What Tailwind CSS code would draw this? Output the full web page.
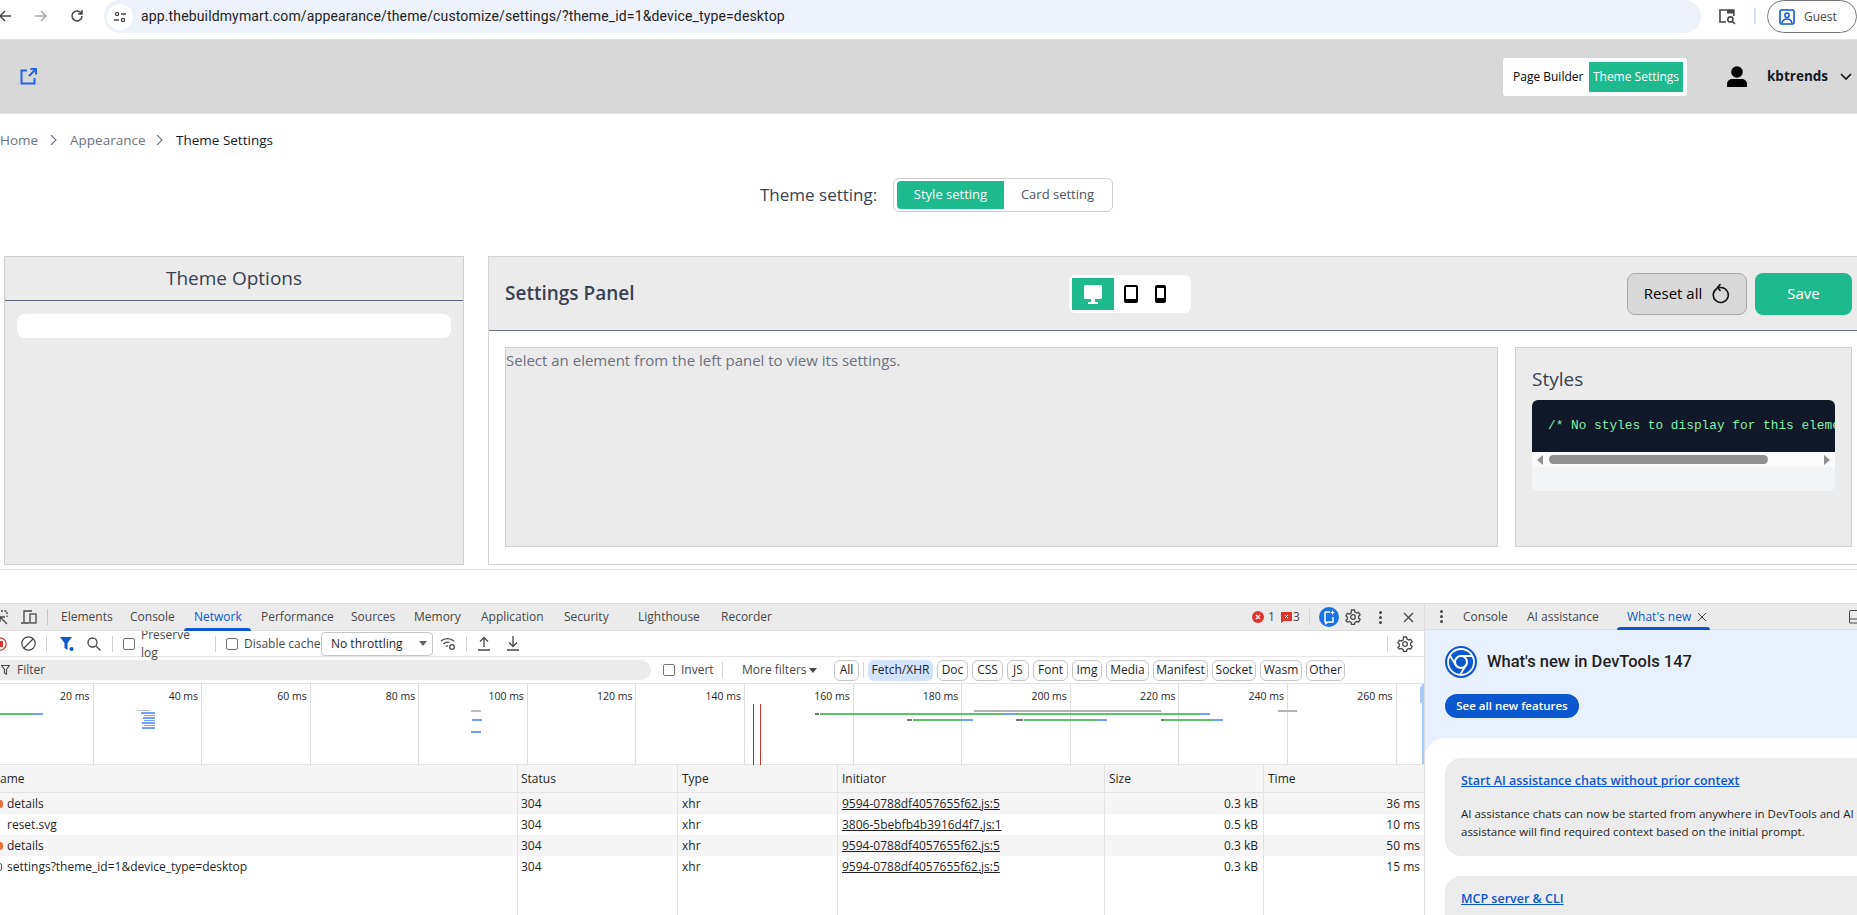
<!DOCTYPE html>
<html lang="en">

<head>
    <meta charset="UTF-8" />
    <title>Theme Settings</title>
    <script src="https://cdn.jsdelivr.net/npm/@tailwindcss/browser@4"></script>
</head>

<body class="w-[1857px] h-[915px] overflow-hidden bg-white font-['Open_Sans',sans-serif] text-[#1f1f1f]">

    <!-- Browser toolbar -->
    <div class="relative flex h-[39px] items-start bg-white">
        <svg class="absolute left-[-2px] top-[9px] w-[14px] h-[14px]" viewBox="0 0 14 14" fill="none" stroke="#474747" stroke-width="1.5"><path d="M13 7H2M7 2 2 7l5 5" /></svg>
        <svg class="absolute left-[34px] top-[9px] w-[14px] h-[14px]" viewBox="0 0 14 14" fill="none" stroke="#a8a8a8" stroke-width="1.5"><path d="M1 7h11M7 2l5 5-5 5" /></svg>
        <svg class="absolute left-[70px] top-[9px] w-[14px] h-[14px]" viewBox="0 0 14 14" fill="none" stroke="#474747" stroke-width="1.5"><path d="M12 7a5 5 0 1 1-1.5-3.6L12 5M12 1v4H8" /></svg>
        <div class="ml-[104px] flex h-[33px] w-[1611px] items-center rounded-r-full rounded-l-full bg-[#ecf1fa]">
            <div class="ml-[3px] flex h-[26px] w-[26px] items-center justify-center rounded-full bg-white">
                <svg class="w-[14px] h-[14px]" viewBox="0 0 14 14" fill="none" stroke="#474747" stroke-width="1.3"><circle cx="4" cy="4" r="1.6" /><path d="M8 4h5M1 10h5" /><circle cx="10" cy="10" r="1.6" /></svg>
            </div>
            <span class="ml-[8px] font-['Roboto',sans-serif] text-[14px] tracking-[0.01em] text-[#1f1f1f]">app.thebuildmymart.com/appearance/theme/customize/settings/?theme_id=1&amp;device_type=desktop</span>
        </div>
        <svg class="ml-[17px] mt-[8px] w-[18px] h-[17px]" viewBox="0 0 18 17" fill="none" stroke="#474747" stroke-width="1.6"><path d="M8 14H2V2h14v6" /><rect x="9" y="2" width="7" height="3.5" fill="#474747" stroke="none" /><circle cx="12.5" cy="11.5" r="2.6" /><path d="m14.5 13.5 2.5 2.5" /></svg>
        <div class="ml-[18px] mt-[8px] h-[16px] w-[2px] bg-[#d3e3fd]"></div>
        <div class="ml-[11px] flex h-[33px] w-[90px] shrink-0 items-center rounded-full border border-[#747775] pl-[11px]">
            <svg class="w-[16px] h-[16px]" viewBox="0 0 16 16"><rect x="1" y="1" width="14" height="14" rx="1.5" fill="none" stroke="#0b57d0" stroke-width="1.6" /><circle cx="8" cy="6.2" r="2.2" fill="none" stroke="#0b57d0" stroke-width="1.4" /><path d="M3 14c.6-3 2.6-4 5-4s4.400 1 5 4" fill="none" stroke="#0b57d0" stroke-width="1.4" /></svg>
            <span class="ml-[9px] text-[12px] text-[#474747]">Guest</span>
        </div>
    </div>

    <!-- App header -->
    <div class="flex h-[75px] items-center border-y border-[#e3e3e3] bg-[#d8d8d8]">
        <svg class="ml-[20px] w-[17px] h-[17px]" viewBox="0 0 17 17" fill="none" stroke="#2563eb" stroke-width="2"><path d="M7 2.500H1.500v13h13V10M9 8l7-7M10.500 1H16v5.500" /></svg>
        <div class="ml-auto flex h-[38px] w-[184px] items-center rounded-[3px] bg-white pl-[10px] text-[12px]">
            <span class="w-[76px] text-black">Page Builder</span>
            <span class="flex h-[30px] w-[94px] items-center justify-center bg-[#1eb98c] text-white">Theme Settings</span>
        </div>
        <svg class="ml-[40px] w-[20px] h-[21px]" viewBox="0 0 20 21" fill="#000"><circle cx="10" cy="6" r="5.800" /><path d="M0 21v-3c0-3.500 3-5 5-5h10c2 0 5 1.500 5 5v3z" /></svg>
        <span class="ml-[20px] w-[56px] text-[13.500px] font-bold text-[#111827]">kbtrends</span>
        <svg class="ml-[17px] mr-[5px] w-[12px] h-[8px]" viewBox="0 0 12 8" fill="none" stroke="#111" stroke-width="1.6"><path d="m1 1 5 5 5-5" /></svg>
    </div>

    <!-- Breadcrumb -->
    <div class="mt-[15px] flex h-[22px] items-center text-[13.500px]">
        <span class="w-[37px] text-[#6b7280]">Home</span>
        <svg class="ml-[13px] w-[7px] h-[10px]" viewBox="0 0 7 10" fill="none" stroke="#6b7280" stroke-width="1.100"><path d="m1 0 5 5-5 5" /></svg>
        <span class="ml-[13px] w-[73px] text-[#6b7280]">Appearance</span>
        <svg class="ml-[13px] w-[7px] h-[10px]" viewBox="0 0 7 10" fill="none" stroke="#6b7280" stroke-width="1.100"><path d="m1 0 5 5-5 5" /></svg>
        <span class="ml-[13px] text-[#111827]">Theme Settings</span>
    </div>

    <!-- Theme setting switch -->
    <div class="mt-[27px] ml-[760px] flex h-[34px] items-center">
        <span class="w-[133px] text-[17px] font-medium text-[#374151]">Theme setting:</span>
        <div class="flex h-[34px] w-[220px] items-center rounded-md border border-[#cfcfcf] bg-white pl-[3px] text-[13px]">
            <span class="flex h-[28px] w-[107px] items-center justify-center rounded-l-[4px] bg-[#1eb98c] text-white">Style setting</span>
            <span class="flex h-[28px] w-[107px] items-center justify-center text-[#4b5563]">Card setting</span>
        </div>
    </div>

    <!-- Panels -->
    <div class="mt-[44px] flex h-[309px] pl-[4px]">
        <div class="h-full w-[460px] border border-[#cfcfcf] bg-[#ebebeb]">
            <div class="flex h-[44px] items-center justify-center border-b border-[#5b6478] text-[19px] text-[#374151]">Theme Options</div>
            <div class="mx-[12px] mt-[13px] h-[24px] rounded-lg bg-white"></div>
        </div>
        <div class="ml-[24px] h-full w-[1369px] border-y border-l border-[#d4d4d4]">
            <div class="relative flex h-[74px] items-center border-b border-[#6b7280] bg-[#ebebeb] pl-[16px]">
                <span class="text-[19px] font-semibold text-[#374151]">Settings Panel</span>
                <div class="absolute left-[580px] top-[18px] flex h-[38px] w-[122px] items-center rounded-md bg-white pl-[3px]">
                    <span class="flex h-[32px] w-[42px] items-center justify-center bg-[#1eb98c]">
                        <svg class="w-[18px] h-[19px]" viewBox="0 0 18 19" fill="#fff"><path d="M1.500 0h15A1.500 1.500 0 0 1 18 1.500v11a1.500 1.500 0 0 1-1.500 1.500h-15A1.500 1.500 0 0 1 0 12.500v-11A1.500 1.500 0 0 1 1.500 0zM3 3v8h12V3z" /><rect x="3" y="3" width="12" height="8" /><rect x="7" y="14" width="4" height="3" /><rect x="4" y="17" width="10" height="2" /></svg>
                    </span>
                    <svg class="ml-[10px] w-[14px] h-[18px]" viewBox="0 0 14 18" fill="#000"><path fill-rule="evenodd" d="M2 0h10a2 2 0 0 1 2 2v14a2 2 0 0 1-2 2H2a2 2 0 0 1-2-2V2a2 2 0 0 1 2-2zm0 2v12h10V2z" /></svg>
                    <svg class="ml-[17px] w-[11px] h-[18px]" viewBox="0 0 11 18" fill="#000"><path fill-rule="evenodd" d="M2 0h7a2 2 0 0 1 2 2v14a2 2 0 0 1-2 2H2a2 2 0 0 1-2-2V2a2 2 0 0 1 2-2zm0 3v10h7V3z" /></svg>
                </div>
                <div class="ml-auto mr-[5px] flex items-center gap-[8px]">
                    <div class="flex h-[42px] w-[120px] items-center justify-center gap-[10px] rounded-lg border border-[#a9a9a9] bg-[#d8d8d8] text-[15px] text-black">
                        Reset all
                        <svg class="w-[18px] h-[20px]" viewBox="0 0 18 20" fill="none" stroke="#111" stroke-width="1.600"><path d="M5 4.500a7.500 7.500 0 1 0 4-1H6M8.500 0 5.500 3.500 8.500 7" /></svg>
                    </div>
                    <div class="flex h-[42px] w-[97px] items-center justify-center rounded-lg bg-[#1eb98c] text-[15px] text-white">Save</div>
                </div>
            </div>
            <div class="flex gap-[17px] pl-[16px] pt-[16px]">
                <div class="h-[200px] w-[993px] border border-[#cfcfcf] bg-[#ebebeb] text-[15px] leading-[24px] text-[#6b7280]">Select an element from the left panel to view its settings.</div>
                <div class="h-[200px] w-[337px] border border-[#cfcfcf] bg-[#ebebeb] pl-[16px] pr-[16px]">
                    <div class="mt-[18px] h-[34px] text-[19px] font-medium leading-[26px] text-[#374151]">Styles</div>
                    <div class="h-[91px] overflow-hidden rounded-md bg-[#f3f4f6]">
                        <div class="flex h-[52px] items-center overflow-hidden whitespace-nowrap bg-[#111827] pl-[16px] font-['Liberation_Mono',monospace] text-[12.800px] text-[#86efac]">/* No styles to display for this element */</div>
                        <div class="relative h-[15px] bg-[#fafafa]">
                            <span class="absolute left-[5px] top-[3px] h-0 w-0 border-y-[5px] border-r-[6px] border-y-transparent border-r-[#8f8f8f]"></span>
                            <span class="absolute left-[17px] top-[3px] h-[9px] w-[219px] rounded-full bg-[#8f8f8f]"></span>
                            <span class="absolute right-[5px] top-[3px] h-0 w-0 border-y-[5px] border-l-[6px] border-y-transparent border-l-[#8f8f8f]"></span>
                        </div>
                    </div>
                </div>
            </div>
        </div>
    </div>
    <div class="mt-[4px] h-[1px] bg-[#e5e5e5]"></div>

    <!-- DevTools -->
    <div class="mt-[33px] flex h-[312px] border-t border-[#dcdcdc] text-[12px] text-[#474747]">
        <div class="w-[1424px] shrink-0">

            <!-- Main tabs -->
            <div class="relative flex h-[27px] items-center border-b border-[#dcdcdc] bg-[#ebebeb]">
                <svg class="ml-[-7px] w-[15px] h-[15px]" viewBox="0 0 15 15" fill="none" stroke="#474747" stroke-width="1.300"><path stroke-dasharray="2 1.500" d="M1 1h13v6M1 1v13h6" /><path d="m7 7 7 7M7 7h5M7 7v5" /></svg>
                <svg class="ml-[13px] w-[16px] h-[15px]" viewBox="0 0 16 15" fill="none" stroke="#474747" stroke-width="1.300"><path d="M3 12V1h8M0 13h8" /><rect x="9" y="4" width="6" height="9" /></svg>
                <div class="ml-[10px] h-[16px] w-px bg-[#c4c7c5]"></div>
                <span class="ml-[13px] w-[69px]">Elements</span>
                <span class="w-[64px]">Console</span>
                <span class="relative flex h-full w-[67px] items-center text-[#0b57d0]">Network<span class="absolute left-[-10px] bottom-[-1px] h-[3px] w-[67px] rounded-t-sm bg-[#0b57d0]"></span></span>
                <span class="w-[90px]">Performance</span>
                <span class="w-[63px]">Sources</span>
                <span class="w-[67px]">Memory</span>
                <span class="w-[83px]">Application</span>
                <span class="w-[74px]">Security</span>
                <span class="w-[83px]">Lighthouse</span>
                <span>Recorder</span>
                <div class="absolute right-[10px] top-[2px] flex h-[22px] items-center">
                    <svg class="w-[12px] h-[12px]" viewBox="0 0 12 12"><circle cx="6" cy="6" r="6" fill="#dc362e" /><path d="m4 4 4 4M8 4 4 8" stroke="#fff" stroke-width="1.200" /></svg>
                    <span class="ml-[4px] w-[13px]">1</span>
                    <svg class="w-[11px] h-[11px]" viewBox="0 0 11 11"><path d="M0 0h11v9H3l-3 2z" fill="#dc362e" /><path d="m4 3 3 3M7 3 4 6" stroke="#fff" /></svg>
                    <span class="ml-[1px] w-[16px]">3</span>
                    <div class="h-[16px] w-px bg-[#d4d4d4]"></div>
                    <svg class="ml-[9px] w-[20px] h-[20px]" viewBox="0 0 20 20"><circle cx="10" cy="10" r="10" fill="#1b73e8" /><path d="M6 5h5M14 10v5H9l-2 1.500V15H6V5" fill="none" stroke="#fff" stroke-width="1.500" /><path d="m13.500 3 .8 1.700 1.700.8-1.700.8-.8 1.700-.8-1.700-1.700-.8 1.700-.8z" fill="#fff" /></svg>
                    <svg class="ml-[6px] w-[16px] h-[16px]" viewBox="0 0 16 16" fill="none" stroke="#474747" stroke-width="1.300"><circle cx="8" cy="8" r="2.300" /><path d="M6.500 1h3l.4 2 1.800 1 1.900-.7 1.500 2.600-1.500 1.300v2l1.500 1.300-1.500 2.600-1.900-.7-1.800 1-.4 2h-3l-.4-2-1.800-1-1.900.7L.9 11.500l1.500-1.300v-2L.9 6.900 2.400 4.300l1.900.7 1.800-1z" /></svg>
                    <svg class="ml-[18px] w-[3px] h-[13px]" viewBox="0 0 3 13" fill="#474747"><circle cx="1.500" cy="1.500" r="1.500" /><circle cx="1.500" cy="6.500" r="1.500" /><circle cx="1.500" cy="11.500" r="1.500" /></svg>
                    <svg class="ml-[21px] w-[11px] h-[11px]" viewBox="0 0 11 11" stroke="#474747" stroke-width="1.300"><path d="m1 1 9 9M10 1l-9 9" /></svg>
                </div>
            </div>

            <!-- Network toolbar -->
            <div class="flex h-[26px] items-center border-b border-[#e3e3e3] bg-white">
                <svg class="ml-[-7px] w-[14px] h-[14px]" viewBox="0 0 14 14"><circle cx="7" cy="7" r="6.200" fill="none" stroke="#dc362e" stroke-width="1.300" /><rect x="4" y="4" width="6" height="6" fill="#dc362e" /></svg>
                <svg class="ml-[14px] w-[15px] h-[15px]" viewBox="0 0 15 15" fill="none" stroke="#474747" stroke-width="1.200"><circle cx="7.500" cy="7.500" r="6.700" /><path d="m3 12 9-9" /></svg>
                <div class="ml-[10px] h-[16px] w-px bg-[#d4d4d4]"></div>
                <svg class="ml-[13px] w-[14px] h-[14px]" viewBox="0 0 14 14" fill="#0b57d0"><path d="M0 0h12L7.500 6v7l-3-2V6z" /><circle cx="11.500" cy="12" r="2" /></svg>
                <svg class="ml-[13px] w-[14px] h-[14px]" viewBox="0 0 14 14" fill="none" stroke="#474747" stroke-width="1.300"><circle cx="5.500" cy="5.500" r="4.500" /><path d="m9 9 4.500 4.500" /></svg>
                <div class="ml-[11px] h-[16px] w-px bg-[#d4d4d4]"></div>
                <span class="ml-[10px] h-[12px] w-[12px] rounded-[2px] border border-[#747775]"></span>
                <span class="ml-[6px] w-[68px]">Preserve log</span>
                <div class="ml-[6px] h-[16px] w-px bg-[#d4d4d4]"></div>
                <span class="ml-[10px] h-[12px] w-[12px] rounded-[2px] border border-[#747775]"></span>
                <span class="ml-[6px] w-[77px] whitespace-nowrap">Disable cache</span>
                <div class="flex h-[24px] w-[112px] items-center justify-between rounded-[4px] border border-[#c4c7c5] pl-[9px] pr-[5px] text-[#1f1f1f]">
                    No throttling
                    <span class="h-0 w-0 border-x-[4px] border-t-[5px] border-x-transparent border-t-[#5f6368]"></span>
                </div>
                <svg class="ml-[7px] w-[16px] h-[15px]" viewBox="0 0 16 15" fill="none" stroke="#474747" stroke-width="1.300"><path d="M1 5a10 10 0 0 1 13 0M3.500 8a6 6 0 0 1 6-1.500M6 10.500a2 2 0 0 1 2-.5" /><circle cx="12" cy="11" r="2.300" /></svg>
                <div class="ml-[10px] h-[16px] w-px bg-[#d4d4d4]"></div>
                <svg class="ml-[11px] w-[12px] h-[15px]" viewBox="0 0 12 15" fill="none" stroke="#474747" stroke-width="1.300"><path d="M6 11V2M2 5.500 6 1.500l4 4M0 14h12" /></svg>
                <svg class="ml-[17px] w-[12px] h-[15px]" viewBox="0 0 12 15" fill="none" stroke="#474747" stroke-width="1.300"><path d="M6 0v10M2 6.500l4 4 4-4M0 14h12" /></svg>
                <div class="ml-auto h-[16px] w-px bg-[#d4d4d4]"></div>
                <svg class="ml-[9px] mr-[11px] w-[16px] h-[16px]" viewBox="0 0 16 16" fill="none" stroke="#474747" stroke-width="1.300"><circle cx="8" cy="8" r="2.300" /><path d="M6.500 1h3l.4 2 1.800 1 1.900-.7 1.500 2.600-1.500 1.300v2l1.500 1.300-1.500 2.600-1.900-.7-1.800 1-.4 2h-3l-.4-2-1.800-1-1.900.7L.9 11.500l1.500-1.300v-2L.9 6.900 2.400 4.300l1.900.7 1.800-1z" /></svg>
            </div>

            <!-- Filter bar -->
            <div class="flex h-[27px] items-center border-b border-[#e3e3e3] bg-white">
                <div class="flex h-[20px] w-[651px] items-center rounded-r-full bg-[#ebebeb]">
                    <svg class="ml-[1px] w-[9px] h-[10px]" viewBox="0 0 9 10" fill="none" stroke="#474747" stroke-width="1.100"><path d="M.5.500h8L5.500 4.500V9l-2-1V4.500z" /></svg>
                    <span class="ml-[7px]">Filter</span>
                </div>
                <span class="ml-[12px] h-[12px] w-[12px] rounded-[2px] border border-[#747775]"></span>
                <span class="ml-[6px] w-[41px]">Invert</span>
                <div class="h-[16px] w-px bg-[#d4d4d4]"></div>
                <span class="ml-[19px] w-[66px] whitespace-nowrap">More filters</span>
                <span class="ml-[1px] h-0 w-0 border-x-[4px] border-t-[5px] border-x-transparent border-t-[#474747]"></span>
                <div class="ml-[17px] flex gap-[4px] text-[#1f1f1f]">
                    <span class="flex h-[21px] w-[25px] items-center justify-center rounded-[6px] border border-[#c4c7c5]">All</span>
                    <span class="flex h-[21px] w-[1px] items-center"><span class="h-[16px] w-px bg-[#d4d4d4]"></span></span>
                    <span class="flex h-[21px] w-[65px] items-center justify-center rounded-[6px] bg-[#d3e3fd]">Fetch/XHR</span>
                    <span class="flex h-[21px] w-[31px] items-center justify-center rounded-[6px] border border-[#c4c7c5]">Doc</span>
                    <span class="flex h-[21px] w-[31px] items-center justify-center rounded-[6px] border border-[#c4c7c5]">CSS</span>
                    <span class="flex h-[21px] w-[22px] items-center justify-center rounded-[6px] border border-[#c4c7c5]">JS</span>
                    <span class="flex h-[21px] w-[35px] items-center justify-center rounded-[6px] border border-[#c4c7c5]">Font</span>
                    <span class="flex h-[21px] w-[30px] items-center justify-center rounded-[6px] border border-[#c4c7c5]">Img</span>
                    <span class="flex h-[21px] w-[43px] items-center justify-center rounded-[6px] border border-[#c4c7c5]">Media</span>
                    <span class="flex h-[21px] w-[55px] items-center justify-center rounded-[6px] border border-[#c4c7c5]">Manifest</span>
                    <span class="flex h-[21px] w-[44px] items-center justify-center rounded-[6px] border border-[#c4c7c5]">Socket</span>
                    <span class="flex h-[21px] w-[42px] items-center justify-center rounded-[6px] border border-[#c4c7c5]">Wasm</span>
                    <span class="flex h-[21px] w-[39px] items-center justify-center rounded-[6px] border border-[#c4c7c5]">Other</span>
                </div>
            </div>

            <!-- Overview timeline -->
            <div class="relative flex h-[81px] border-b border-[#e3e3e3] bg-white pr-[1px] text-[10.500px] text-[#1f1f1f]">
                <div class="h-full w-[93.500px] shrink-0 border-r border-[#dedede] pr-[3px] pt-[5px] text-right">20 ms</div>
                <div class="h-full w-[108.600px] shrink-0 border-r border-[#dedede] pr-[3px] pt-[5px] text-right">40 ms</div>
                <div class="h-full w-[108.600px] shrink-0 border-r border-[#dedede] pr-[3px] pt-[5px] text-right">60 ms</div>
                <div class="h-full w-[108.600px] shrink-0 border-r border-[#dedede] pr-[3px] pt-[5px] text-right">80 ms</div>
                <div class="h-full w-[108.600px] shrink-0 border-r border-[#dedede] pr-[3px] pt-[5px] text-right">100 ms</div>
                <div class="h-full w-[108.600px] shrink-0 border-r border-[#dedede] pr-[3px] pt-[5px] text-right">120 ms</div>
                <div class="h-full w-[108.600px] shrink-0 border-r border-[#dedede] pr-[3px] pt-[5px] text-right">140 ms</div>
                <div class="h-full w-[108.600px] shrink-0 border-r border-[#dedede] pr-[3px] pt-[5px] text-right">160 ms</div>
                <div class="h-full w-[108.600px] shrink-0 border-r border-[#dedede] pr-[3px] pt-[5px] text-right">180 ms</div>
                <div class="h-full w-[108.600px] shrink-0 border-r border-[#dedede] pr-[3px] pt-[5px] text-right">200 ms</div>
                <div class="h-full w-[108.600px] shrink-0 border-r border-[#dedede] pr-[3px] pt-[5px] text-right">220 ms</div>
                <div class="h-full w-[108.600px] shrink-0 border-r border-[#dedede] pr-[3px] pt-[5px] text-right">240 ms</div>
                <div class="h-full w-[108.600px] shrink-0 border-r border-[#dedede] pr-[3px] pt-[5px] text-right">260 ms</div>

                <!-- request bars -->
                <span class="absolute left-0 top-[29px] h-[2px] w-[33px] bg-[#5cc168]"></span>
                <span class="absolute left-[33px] top-[29px] h-[2px] w-[10px] bg-[#6ea1f7]"></span>
                <span class="absolute left-[137px] top-[26px] h-[1px] w-[13px] bg-[#bdbdbd]"></span>
                <span class="absolute left-[141px] top-[28px] h-[2px] w-[14px] bg-[#6ea1f7]"></span>
                <span class="absolute left-[144px] top-[31px] h-[1px] w-[11px] bg-[#6ea1f7]"></span>
                <span class="absolute left-[143px] top-[33px] h-[2px] w-[12px] bg-[#6ea1f7]"></span>
                <span class="absolute left-[144px] top-[36px] h-[1px] w-[11px] bg-[#6ea1f7]"></span>
                <span class="absolute left-[142px] top-[38px] h-[2px] w-[13px] bg-[#6ea1f7]"></span>
                <span class="absolute left-[144px] top-[41px] h-[1px] w-[11px] bg-[#6ea1f7]"></span>
                <span class="absolute left-[142px] top-[43px] h-[2px] w-[13px] bg-[#6ea1f7]"></span>
                <span class="absolute left-[471px] top-[26px] h-[2px] w-[10px] bg-[#bdbdbd]"></span>
                <span class="absolute left-[472px] top-[35px] h-[2px] w-[10px] bg-[#6ea1f7]"></span>
                <span class="absolute left-[471px] top-[47px] h-[2px] w-[10px] bg-[#6ea1f7]"></span>
                <span class="absolute left-[753px] top-[20px] h-[61px] w-px bg-[#1a5fd0]"></span>
                <span class="absolute left-[760px] top-[20px] h-[61px] w-px bg-[#c5352b]"></span>
                <span class="absolute left-[974px] top-[26px] h-[2px] w-[187px] bg-[#b3b3b3]"></span>
                <span class="absolute left-[815px] top-[29px] h-[2px] w-[4px] bg-[#777777]"></span>
                <span class="absolute left-[820px] top-[29px] h-[2px] w-[183px] bg-[#5cc168]"></span>
                <span class="absolute left-[1003px] top-[29px] h-[2px] w-[13px] bg-[#6ea1f7]"></span>
                <span class="absolute left-[1016px] top-[29px] h-[2px] w-[184px] bg-[#5cc168]"></span>
                <span class="absolute left-[1200px] top-[29px] h-[2px] w-[10px] bg-[#6ea1f7]"></span>
                <span class="absolute left-[907px] top-[35px] h-[2px] w-[5px] bg-[#777777]"></span>
                <span class="absolute left-[913px] top-[35px] h-[2px] w-[49px] bg-[#5cc168]"></span>
                <span class="absolute left-[962px] top-[35px] h-[2px] w-[11px] bg-[#6ea1f7]"></span>
                <span class="absolute left-[1016px] top-[35px] h-[2px] w-[7px] bg-[#777777]"></span>
                <span class="absolute left-[1024px] top-[35px] h-[2px] w-[73px] bg-[#5cc168]"></span>
                <span class="absolute left-[1097px] top-[35px] h-[2px] w-[10px] bg-[#6ea1f7]"></span>
                <span class="absolute left-[1161px] top-[35px] h-[2px] w-[3px] bg-[#777777]"></span>
                <span class="absolute left-[1164px] top-[35px] h-[2px] w-[49px] bg-[#5cc168]"></span>
                <span class="absolute left-[1213px] top-[35px] h-[2px] w-[10px] bg-[#6ea1f7]"></span>
                <span class="absolute left-[1278px] top-[26px] h-[2px] w-[19px] bg-[#b3b3b3]"></span>
                <span class="absolute right-0 top-0 h-full w-[2px] bg-[#a8c7fa]"></span>
                <span class="absolute right-0 top-[1px] h-[19px] w-[4px] rounded-l-sm bg-[#a8c7fa]"></span>
            </div>

            <!-- Requests table -->
            <div class="flex h-[28px] border-b border-[#e3e3e3] bg-[#f5f5f5] text-[#1f1f1f]">
                <div class="flex w-[518px] items-center border-r border-[#e3e3e3]">ame</div>
                <div class="flex w-[160px] items-center border-r border-[#e3e3e3] pl-[3px]">Status</div>
                <div class="flex w-[160px] items-center border-r border-[#e3e3e3] pl-[4px]">Type</div>
                <div class="flex w-[267px] items-center border-r border-[#e3e3e3] pl-[4px]">Initiator</div>
                <div class="flex w-[159px] items-center border-r border-[#e3e3e3] pl-[4px]">Size</div>
                <div class="flex flex-1 items-center pl-[4px]">Time</div>
            </div>
            <div class="flex h-[21px] bg-[#f5f5f5] text-[#1f1f1f]">
                <div class="flex w-[518px] items-center border-r border-[#e3e3e3]"><span class="ml-[-3px] h-[8px] w-[6px] rounded-full bg-[#e8703a]"></span><span class="ml-[4px]">details</span></div>
                <div class="flex w-[160px] items-center border-r border-[#e3e3e3] pl-[3px]">304</div>
                <div class="flex w-[160px] items-center border-r border-[#e3e3e3] pl-[4px]">xhr</div>
                <div class="flex w-[267px] items-center border-r border-[#e3e3e3] pl-[4px] underline">9594-0788df4057655f62.js:5</div>
                <div class="flex w-[159px] items-center justify-end border-r border-[#e3e3e3] pr-[5px]">0.3 kB</div>
                <div class="flex flex-1 items-center justify-end pr-[4px]">36 ms</div>
            </div>
            <div class="flex h-[21px] bg-white text-[#1f1f1f]">
                <div class="flex w-[518px] items-center border-r border-[#e3e3e3] pl-[7px]">reset.svg</div>
                <div class="flex w-[160px] items-center border-r border-[#e3e3e3] pl-[3px]">304</div>
                <div class="flex w-[160px] items-center border-r border-[#e3e3e3] pl-[4px]">xhr</div>
                <div class="flex w-[267px] items-center border-r border-[#e3e3e3] pl-[4px] underline">3806-5bebfb4b3916d4f7.js:1</div>
                <div class="flex w-[159px] items-center justify-end border-r border-[#e3e3e3] pr-[5px]">0.5 kB</div>
                <div class="flex flex-1 items-center justify-end pr-[4px]">10 ms</div>
            </div>
            <div class="flex h-[21px] bg-[#f5f5f5] text-[#1f1f1f]">
                <div class="flex w-[518px] items-center border-r border-[#e3e3e3]"><span class="ml-[-3px] h-[8px] w-[6px] rounded-full bg-[#e8703a]"></span><span class="ml-[4px]">details</span></div>
                <div class="flex w-[160px] items-center border-r border-[#e3e3e3] pl-[3px]">304</div>
                <div class="flex w-[160px] items-center border-r border-[#e3e3e3] pl-[4px]">xhr</div>
                <div class="flex w-[267px] items-center border-r border-[#e3e3e3] pl-[4px] underline">9594-0788df4057655f62.js:5</div>
                <div class="flex w-[159px] items-center justify-end border-r border-[#e3e3e3] pr-[5px]">0.3 kB</div>
                <div class="flex flex-1 items-center justify-end pr-[4px]">50 ms</div>
            </div>
            <div class="flex h-[21px] bg-white text-[#1f1f1f]">
                <div class="flex w-[518px] items-center border-r border-[#e3e3e3]"><span class="ml-[-3px] h-[8px] w-[5px] rounded-[2px] border border-[#5f6368]"></span><span class="ml-[5px]">settings?theme_id=1&amp;device_type=desktop</span></div>
                <div class="flex w-[160px] items-center border-r border-[#e3e3e3] pl-[3px]">304</div>
                <div class="flex w-[160px] items-center border-r border-[#e3e3e3] pl-[4px]">xhr</div>
                <div class="flex w-[267px] items-center border-r border-[#e3e3e3] pl-[4px] underline">9594-0788df4057655f62.js:5</div>
                <div class="flex w-[159px] items-center justify-end border-r border-[#e3e3e3] pr-[5px]">0.3 kB</div>
                <div class="flex flex-1 items-center justify-end pr-[4px]">15 ms</div>
            </div>
            <div class="flex h-[60px] bg-white">
                <div class="w-[518px] border-r border-[#e3e3e3]"></div>
                <div class="w-[160px] border-r border-[#e3e3e3]"></div>
                <div class="w-[160px] border-r border-[#e3e3e3]"></div>
                <div class="w-[267px] border-r border-[#e3e3e3]"></div>
                <div class="w-[159px] border-r border-[#e3e3e3]"></div>
            </div>
        </div>

        <!-- What's new drawer -->
        <div class="flex-1 overflow-hidden border-l border-[#dcdcdc]">
            <div class="relative flex h-[26px] items-center border-b border-[#dcdcdc] bg-[#ebebeb] text-[#474747]">
                <svg class="ml-[15px] w-[3px] h-[13px]" viewBox="0 0 3 13" fill="#474747"><circle cx="1.500" cy="1.500" r="1.500" /><circle cx="1.500" cy="6.500" r="1.500" /><circle cx="1.500" cy="11.500" r="1.500" /></svg>
                <span class="ml-[20px] w-[64px]">Console</span>
                <span class="w-[100px] whitespace-nowrap">AI assistance</span>
                <span class="relative flex h-full w-[71px] items-center whitespace-nowrap text-[#0b57d0]">What's new<span class="absolute left-[-10px] bottom-[-1px] h-[3px] w-[93px] rounded-t-sm bg-[#0b57d0]"></span></span>
                <svg class="w-[8px] h-[8px]" viewBox="0 0 8 8" stroke="#474747"><path d="m0 0 8 8M8 0 0 8" /></svg>
                <svg class="absolute right-[-4px] top-[6px] w-[12px] h-[14px]" viewBox="0 0 12 14" fill="none" stroke="#474747"><path d="M.5 13V2a1.500 1.500 0 0 1 1.500-1.500h8M.5 9h11M.5 13h11" /></svg>
            </div>
            <div class="h-[108px] bg-[#e9f0fd]">
                <div class="flex items-center pl-[20px] pt-[16px]">
                    <svg class="w-[32px] h-[32px]" viewBox="0 0 32 32" fill="none" stroke="#0b57d0"><circle cx="16" cy="16" r="16" fill="#0b57d0" stroke="none" /><circle cx="16" cy="16" r="13" stroke="#fff" stroke-width="1.800" /><circle cx="16" cy="16" r="6" stroke="#fff" stroke-width="2" /><path d="M16 10h12M21 19l-6 10M10.800 19 4.500 9" stroke="#fff" stroke-width="1.800" /></svg>
                    <span class="ml-[10px] font-['Roboto',sans-serif] text-[16.500px] font-medium text-[#1f1f1f]">What's new in DevTools 147</span>
                </div>
                <div class="ml-[20px] mt-[16px] flex h-[24px] w-[134px] items-center justify-center rounded-full bg-[#0b57d0] text-[11.500px] font-semibold text-white">See all new features</div>
            </div>
            <div class="h-[177px] bg-[#e9f0fd]">
                <div class="h-full rounded-tl-[20px] bg-white pl-[20px] pt-[20px]">
                    <div class="h-[98px] w-[450px] rounded-[16px] bg-[#ececec] pl-[16px] pt-[13px]">
                        <div class="text-[12.500px] font-semibold leading-[20px] text-[#0b57d0] underline">Start AI assistance chats without prior context</div>
                        <div class="mt-[14px] w-[400px] text-[11.500px] leading-[18px] text-[#1f1f1f]">AI assistance chats can now be started from anywhere in DevTools and AI assistance will find required context based on the initial prompt.</div>
                    </div>
                    <div class="mt-[20px] h-[60px] w-[450px] rounded-[16px] bg-[#ececec] pl-[16px] pt-[13px]">
                        <div class="text-[12.500px] font-semibold leading-[20px] text-[#0b57d0] underline">MCP server &amp; CLI</div>
                    </div>
                </div>
            </div>
        </div>
    </div>

</body>

</html>
